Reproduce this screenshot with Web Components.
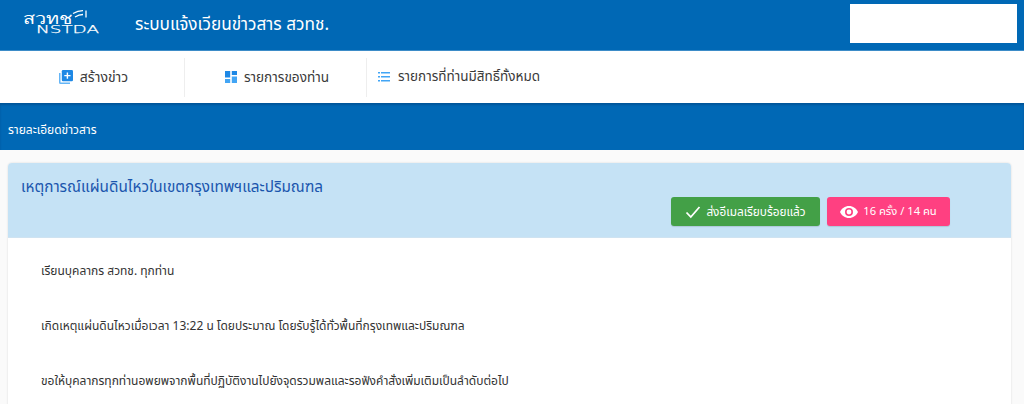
<!DOCTYPE html>
<html lang="th"><head><meta charset="utf-8"><title>ระบบแจ้งเวียนข่าวสาร สวทช.</title>
<style>
html,body{margin:0;padding:0;height:404px;overflow:hidden;background:#fafafa}
body{font-family:"Noto Sans","Noto Sans Thai",Roboto,sans-serif;color:#333}
</style></head><body>
<app-header title-text="ระบบแจ้งเวียนข่าวสาร สวทช."></app-header>
<app-nav>
  <nav-item w="185" icon="add" pad="3">สร้างข่าว</nav-item>
  <nav-item w="182" icon="dash" pad="3">รายการของท่าน</nav-item>
  <nav-item w="200" icon="list" last>รายการที่ท่านมีสิทธิ์ทั้งหมด</nav-item>
</app-nav>
<page-bar>รายละเอียดข่าวสาร</page-bar>
<news-card heading="เหตุการณ์แผ่นดินไหวในเขตกรุงเทพฯและปริมณฑล">
  <status-btn slot="actions" kind="ok">ส่งอีเมลเรียบร้อยแล้ว</status-btn>
  <status-btn slot="actions" kind="view">16 ครั้ง / 14 คน</status-btn>
  <p>เรียนบุคลากร สวทช. ทุกท่าน</p>
  <p>เกิดเหตุแผ่นดินไหวเมื่อเวลา 13:22 น โดยประมาณ โดยรับรู้ได้ทั่วพื้นที่กรุงเทพและปริมณฑล</p>
  <p>ขอให้บุคลากรทุกท่านอพยพจากพื้นที่ปฏิบัติงานไปยังจุดรวมพลและรอฟังคำสั่งเพิ่มเติมเป็นลำดับต่อไป</p>
</news-card>
<script>
const def=(n,render)=>customElements.define(n,class extends HTMLElement{connectedCallback(){if(this.shadowRoot)return;this.attachShadow({mode:"open"}).innerHTML=render(this)}});
def("app-header",e=>`<style>:host{display:flex;align-items:center;height:51px;background:#0068b5;border-bottom:1px solid #3d8cc8;color:#fff;box-sizing:border-box}
.logo{width:78px;height:36px;margin-left:22px;flex:none}
.t{margin-left:35px;font-size:17.2px;flex:1;white-space:nowrap}
.box{width:167px;height:39px;background:#fff;margin:-4px 7px 0 0;flex:none}</style>
<svg class="logo" viewBox="0 0 78 36" fill="#fff"><text x="1" y="17" font-size="15" textLength="49" lengthAdjust="spacingAndGlyphs" font-family="Noto Sans,sans-serif" font-weight="300">สวทช</text>
<text x="14" y="26" font-size="10.500" textLength="63" lengthAdjust="spacingAndGlyphs" font-family="DejaVu Sans,sans-serif" font-weight="200" stroke="#fff" stroke-width=".25">NSTDA</text>
<path d="M51 6.500Q56 3.500 61 3.600M53 10Q57 7.500 61 7.500M64 3.500V10.500" fill="none" stroke="#fff" stroke-width="1.300"/></svg>
<div class="t">${e.getAttribute("title-text")}</div><div class="box"></div>`);
def("app-nav",()=>`<style>:host{display:flex;align-items:center;height:52px;background:#fff;box-sizing:border-box}</style><slot></slot>`);
const icons={add:`<svg viewBox="0 0 14 14" width="14" height="14"><path d="M0 3v9.500A1.500 1.500 0 0 0 1.500 14H11v-1.500H1.500V3z" fill="#64b5f6"/><rect x="2.800" y="0" width="11.200" height="11.200" rx="1.200" fill="#1e88e5"/><path d="M8.400 2.500v6.200M5.300 5.600h6.200" stroke="#fff" stroke-width="1.400"/></svg>`,
dash:`<svg viewBox="0 0 12 12" width="12" height="12"><path d="M0 0h5.200v6.600H0zM6.800 0H12v4H6.800z" fill="#1e88e5"/><path d="M0 8h5.200v4H0zM6.800 5.400H12V12H6.800z" fill="#42a5f5"/></svg>`,
list:`<svg viewBox="0 0 12 10" width="12" height="10" fill="#42a5f5"><path d="M0 0h2v1.600H0zM3 0h9v1.600H3zM0 4h2v1.600H0zM3 4h9v1.600H3zM0 8h2v1.600H0zM3 8h9v1.600H3z"/></svg>`};
def("nav-item",e=>{const last=e.hasAttribute("last");const pad=e.getAttribute("pad");const fs=last?13.5:e.getAttribute("icon")=="add"?14:13.6;return `<style>:host{display:flex;align-items:center;justify-content:${last?"flex-start":"center"};gap:${last?8:7}px;width:${e.getAttribute("w")}px;height:39px;box-sizing:border-box;font-size:${fs}px;color:#3a3a3a;white-space:nowrap;${pad?`padding-left:${pad}px;`:""}${last?"padding-left:11px;":"border-right:1px solid #eee;"}}</style>${icons[e.getAttribute("icon")]}<slot></slot>`});
def("page-bar",()=>`<style>:host{display:flex;align-items:center;height:47px;padding:6px 0 0 8px;background:#0068b5;box-shadow:inset 0 2px 2px #00569a;color:#fff;font-size:12px;box-sizing:border-box}</style><slot></slot>`);
def("news-card",e=>`<style>:host{display:block;margin:13px 13px 0 8px;background:#fff;border-radius:4px;box-shadow:0 0 2px rgba(0,0,0,.15)}
.h{height:75px;background:#c5e2f5;border-radius:4px 4px 0 0;box-sizing:border-box;padding:13px 13px 0;border-bottom:1px solid #cfe3f1}
h2{margin:0;font-size:15.3px;font-weight:400;color:#1a55ad;line-height:20px}
.a{display:flex;gap:7px;margin:1px 0 0 650px}
.b{padding:25px 33px 60px;font-size:12px;color:#333}
::slotted(p){margin:0 0 39px;line-height:16px}</style>
<div class="h"><h2>${e.getAttribute("heading")}</h2><div class="a"><slot name="actions"></slot></div></div><div class="b"><slot></slot></div>`);
def("status-btn",e=>{const ok=e.getAttribute("kind")=="ok";return `<style>:host{display:flex;align-items:center;justify-content:center;gap:5px;height:29px;width:${ok?149:123}px;border-radius:3px;background:${ok?"#43a047":"#ff4081"};color:#fff;font-size:${ok?11.8:11.2}px;box-shadow:0 1px 1px rgba(0,0,0,.12);white-space:nowrap}</style>${ok?`<svg width="16" height="14" viewBox="0 0 16 14"><path d="M1.500 7.500l4.300 4.500L14.500 2" fill="none" stroke="#fff" stroke-width="1.800"/></svg>`:`<svg width="18" height="12" viewBox="0 0 18 12"><path fill="#fff" fill-rule="evenodd" d="M9 0c4 0 7.400 2.500 9 6-1.600 3.500-5 6-9 6S1.600 9.500 0 6c1.600-3.500 5-6 9-6zm0 2a4 4 0 1 0 0 8 4 4 0 0 0 0-8zm0 1.600a2.400 2.400 0 1 1 0 4.800 2.400 2.400 0 0 1 0-4.800z"/></svg>`}<slot></slot>`});
</script>
</body></html>
